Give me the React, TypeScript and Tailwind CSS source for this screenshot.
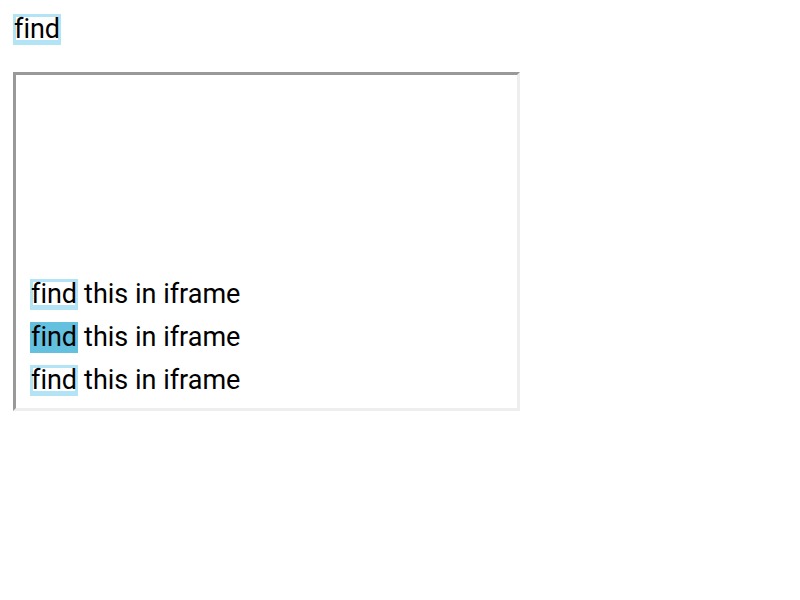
function Hit({ active, children }: { active?: boolean; children: string }) {
  if (active) {
    return <span className="inline-block h-[31px] bg-[#63c1df] px-[1px] leading-[31px]">{children}</span>
  }
  return (
    <span className="inline-block h-[31px] bg-white px-[1px] leading-[31px] shadow-[inset_0_-5px_0_0_#b3e4f5,inset_0_0_0_3px_#b3e4f5]">
      {children}
    </span>
  )
}

function Line({ active }: { active?: boolean }) {
  return (
    <div className="flex h-[31px] items-center gap-[6px]">
      <Hit active={active}>find</Hit>
      <span className="leading-[31px]">this in iframe</span>
    </div>
  )
}

export default function App() {
  return (
    <main className="min-h-[600px] bg-white pl-[13px] pt-[14px] font-['Roboto',sans-serif] text-[27px] text-black [font-variant-ligatures:none]">
      <div className="flex h-[31px]">
        <Hit>find</Hit>
      </div>
      <div className="mt-[27px] flex h-[339px] w-[507px] flex-col justify-end gap-[12px] border-[3px] border-t-[#999999] border-l-[#999999] border-r-[#eeeeee] border-b-[#eeeeee] pb-[12px] pl-[14px]">
        <Line />
        <Line active />
        <Line />
      </div>
    </main>
  )
}
